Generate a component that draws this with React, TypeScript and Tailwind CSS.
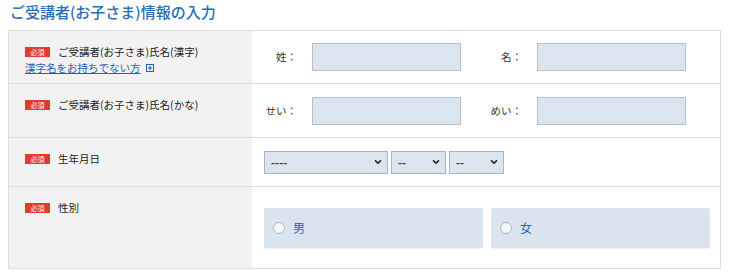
import { ChevronDown } from 'lucide-react';

const FONT = 'font-["Noto_Sans_CJK_JP","Noto_Sans",sans-serif]';

function Hissu() {
  return (
    <span className="inline-flex h-[10px] w-[25px] shrink-0 items-center justify-center bg-[#e23a2e] text-[7px] leading-none text-white">
      必須
    </span>
  );
}

function Label({ text, children }: { text: string; children?: React.ReactNode }) {
  return (
    <div className="w-[243px] shrink-0 bg-[#f2f2f2] pl-[16px] pt-[13px]">
      <div className="flex items-center gap-[8px]">
        <Hissu />
        <span className="text-[10.5px] leading-[16px] text-[#1a1a1a]">{text}</span>
      </div>
      {children}
    </div>
  );
}

function TextInput() {
  return <div className="h-[28px] w-[149px] border border-[#b9bec4] bg-[#dae5f0]" />;
}

function Field({ label }: { label: string }) {
  return (
    <div className="flex items-center">
      <span className="w-[34px] text-right text-[10.5px] text-[#333]">{label}</span>
      <div className="ml-[15px]">
        <TextInput />
      </div>
    </div>
  );
}

function Select({ w, text }: { w: string; text: string }) {
  return (
    <div className={`flex h-[23px] items-center justify-between border border-[#aeb3b8] bg-[#dae5f0] pl-[6px] pr-[4px] ${w}`}>
      <span className="text-[11px] font-bold leading-none text-[#333]">{text}</span>
      <ChevronDown className="h-[10px] w-[10px] text-[#222]" strokeWidth={4} />
    </div>
  );
}

function Radio({ text }: { text: string }) {
  return (
    <div className="flex h-[40px] w-[219px] items-center gap-[8px] rounded-[2px] bg-[#dae4ef] pl-[9px] shadow-[0_1px_1px_rgba(0,0,0,0.06)]">
      <span className="h-[12px] w-[12px] rounded-full border border-[#b5b9bd] bg-[#f4f6f8]" />
      <span className="text-[12px] text-[#1f63b6]">{text}</span>
    </div>
  );
}

export default function App() {
  return (
    <div className={`h-[272px] w-[740px] bg-white ${FONT}`}>
      <h1 className="pl-[10px] pt-[1px] text-[15px] font-medium leading-[22px] text-[#2a6db5]">
        ご受講者(お子さま)情報の入力
      </h1>
      <div className="ml-[8px] mt-[7px] w-[713px] border border-[#dcdcdc]">
        <div className="flex h-[53px] border-b border-[#dcdcdc]">
          <Label text="ご受講者(お子さま)氏名(漢字)">
            <div className="mt-[1px] flex items-center gap-[5px]">
              <span className="text-[10.5px] leading-[14px] text-[#1d62b8] underline">
                漢字名をお持ちでない方
              </span>
              <svg width="8" height="8" viewBox="0 0 8 8" className="text-[#1d62b8]">
                <rect x="0.5" y="0.5" width="7" height="7" fill="none" stroke="currentColor" />
                <path d="M4 2v4M2 4h4" stroke="currentColor" strokeWidth="1.2" />
              </svg>
            </div>
          </Label>
          <div className="flex flex-1 items-center gap-[27px] pl-[11px]">
            <Field label="姓：" />
            <Field label="名：" />
          </div>
        </div>
        <div className="flex h-[54px] border-b border-[#dcdcdc]">
          <Label text="ご受講者(お子さま)氏名(かな)" />
          <div className="flex flex-1 items-center gap-[27px] pl-[11px]">
            <Field label="せい：" />
            <Field label="めい：" />
          </div>
        </div>
        <div className="flex h-[49px] border-b border-[#dcdcdc]">
          <Label text="生年月日" />
          <div className="flex flex-1 items-center gap-[3px] pl-[12px]">
            <Select w="w-[124px]" text="----" />
            <Select w="w-[55px]" text="--" />
            <Select w="w-[55px]" text="--" />
          </div>
        </div>
        <div className="flex h-[81px]">
          <Label text="性別" />
          <div className="flex flex-1 items-center gap-[8px] pl-[12px]">
            <Radio text="男" />
            <Radio text="女" />
          </div>
        </div>
      </div>
    </div>
  );
}
